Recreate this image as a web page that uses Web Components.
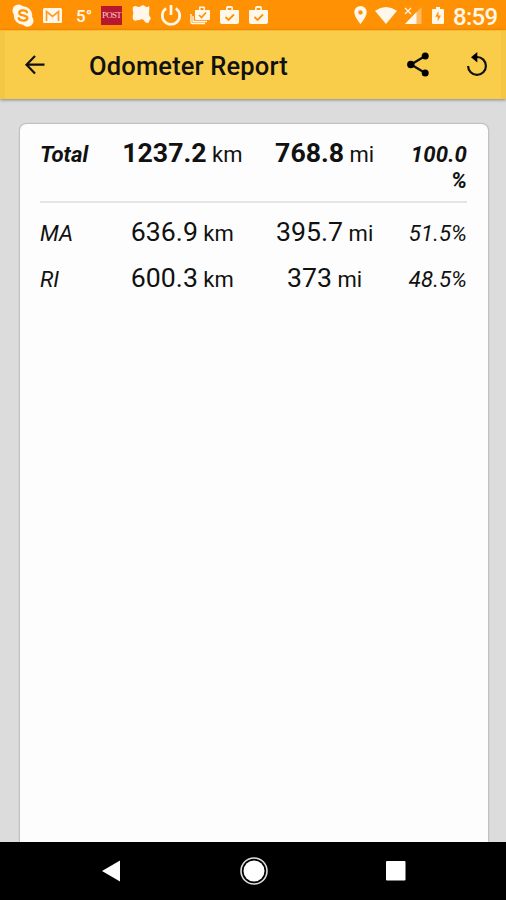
<!DOCTYPE html>
<html lang="en">
<head>
<meta charset="utf-8">
<title>Odometer Report</title>
<style>
html,body{margin:0;height:100%;overflow:hidden}
body{font-family:Roboto,"Liberation Sans",sans-serif;color:#111}
</style>
</head>
<body>
<report-app></report-app>
<script>
const define = (name, html) => {
  const t = document.createElement('template');
  t.innerHTML = html;
  customElements.define(name, class extends HTMLElement {
    constructor() {
      super();
      this.attachShadow({mode: 'open'}).append(t.content.cloneNode(true));
    }
  });
};

define('status-bar', `
<style>
:host{display:flex;height:30px;box-sizing:border-box;padding:0 9px 0 12px;background:#ff9104;color:#fff8ea;align-items:center;overflow:hidden}
svg{display:block;flex:none;overflow:visible;fill:currentColor}
.deg{font-size:17px;line-height:30px;width:16px;margin:1px 9px 0 14px;white-space:nowrap;font-weight:500}
.post{width:21px;height:19px;margin-right:10px;background:#b71830;color:#f7cfc9;font:9px/19px "Liberation Serif",serif;letter-spacing:-.8px;text-align:center;overflow:hidden}
.gap{flex:1}
.time{font-size:24px;line-height:30px;font-weight:500;margin:3px 0 0 9px;width:44px;white-space:nowrap;letter-spacing:-.7px}
</style>
<svg width="22" height="23" viewBox="0 0 22 23" style="margin-right:9px"><circle cx="11" cy="11.5" r="9.2"/><circle cx="6.5" cy="6.5" r="6"/><circle cx="15.5" cy="16.8" r="6"/><path d="M15 8.3C14 5.8 7.3 5.6 7.3 8.9c0 3.4 8 1.6 8 5.2 0 3.300-7.400 3.200-8.600.2" fill="none" stroke="#ff9104" stroke-width="2.300" stroke-linecap="round"/></svg>
<svg width="19" height="15" viewBox="0 0 19 15"><rect width="19" height="15" rx="1.5"/><path d="M3.500 13V3.500l6 5 6-5V13" fill="none" stroke="#ff9c28" stroke-width="1.700"/></svg>
<span class="deg">5°</span>
<span class="post">POST</span>
<svg width="19" height="20" viewBox="0 0 19 20" style="margin-right:9px"><path d="M1 2q2-1.500 4-.5t4-.5 4 .3 4-.3q.8 2 .2 4.500l-.2 4q.5 2 1.800 3.500-.3 2-1.500 2.500.2 2.500-2 2.500-2 0-3.300-2.500-1-1.500-3-1.200-2 1.200-4 .9-2.500 1-3.500-.2Q.2 13 .8 10.500q.8-2 .2-4-.6-2.500 0-4.500z"/></svg>
<svg width="22" height="22" viewBox="0 0 22 22" style="margin-right:8px"><path d="M6.200 4.300a8.700 8.700 0 1 0 9.600 0M11 1v10" fill="none" stroke="currentColor" stroke-width="2.700"/></svg>
<svg width="20" height="19" viewBox="0 0 20 19" style="margin-right:10px"><path d="M5 4h4V1.500q0-1 1-1h4q1 0 1 1V4h4q1 0 1 1v8q0 1-1 1H6q-1 0-1-1zM10.500 4h3V2h-3z" fill-rule="evenodd"/><path d="M1 8v8.500q0 1 1 1h13M3 10v5.500h14" fill="none" stroke="currentColor" stroke-width="1.300"/><path d="M9 9l2.500 2.500L16 6.500" fill="none" stroke="#ff9104" stroke-width="1.700"/></svg>
<svg width="19" height="19" viewBox="0 0 19 19" style="margin-right:10px"><path d="M6 4V2q0-2 2-2h3q2 0 2 2v2h5q1 0 1 1v11q0 2-2 2H2q-2 0-2-2V5q0-1 1-1zm1.700 0h3.600V2H7.700z" fill-rule="evenodd"/><path d="M5.500 11l3 3L14 8.500" fill="none" stroke="#ff9104" stroke-width="1.800"/></svg>
<svg width="19" height="19" viewBox="0 0 19 19"><path d="M6 4V2q0-2 2-2h3q2 0 2 2v2h5q1 0 1 1v11q0 2-2 2H2q-2 0-2-2V5q0-1 1-1zm1.700 0h3.600V2H7.700z" fill-rule="evenodd"/><path d="M5.500 11l3 3L14 8.500" fill="none" stroke="#ff9104" stroke-width="1.800"/></svg>
<span class="gap"></span>
<svg width="13" height="18" viewBox="0 0 13 18" style="margin-right:8px"><path fill-rule="evenodd" d="M6.500 0A6.200 6.200 0 0 0 .3 6.300C.3 11 6.500 18 6.500 18s6.200-7 6.200-11.700A6.200 6.200 0 0 0 6.500 0zm0 4.200a2.200 2.200 0 1 1 0 4.400 2.200 2.200 0 0 1 0-4.400z"/></svg>
<svg width="22" height="17" viewBox="0 0 22 17" style="margin-right:7px"><path d="M0 3.700Q11-3.700 22 3.700L11 17z"/></svg>
<svg width="18" height="17" viewBox="0 0 18 17" style="margin-right:10px"><path d="M17.500 0v17H1z" opacity=".4"/><path d="M12.500 5v12H1z"/><path d="M1 1l6 6M7 1L1 7" fill="none" stroke="currentColor" stroke-width="1.300"/></svg>
<svg width="12" height="17" viewBox="0 0 12 17"><path d="M4 0h4v2h3q1 0 1 1v13q0 1-1 1H1q-1 0-1-1V3q0-1 1-1h3z"/><path d="M6.500 4L3.300 9.800h2.400V14.500l3.200-6H6.400z" fill="#ff9104"/></svg>
<span class="time">8:59</span>
`);

define('app-bar', `
<style>
:host{display:flex;height:69px;box-sizing:border-box;align-items:center;padding:0 19px 0 25px;background:#f9cd4a;color:#111;border-top:1px solid #fcb936;box-shadow:inset 5px 0 #f5c544,inset -5px 0 #f5c544,0 1px 3px #0006;position:relative}
svg{display:block;flex:none;overflow:visible}
h1{font-size:25.500px;line-height:30px;font-weight:500;margin:2px 0 0 44px;flex:1;white-space:nowrap;letter-spacing:.17px}
</style>
<svg width="20" height="20" viewBox="0 0 20 20"><path d="M10 1L1.500 9.700l8.500 8.700M1.500 9.700H19.500" fill="none" stroke="#111" stroke-width="2.200"/></svg>
<h1><slot></slot></h1>
<svg width="22" height="25" viewBox="0 0 22 25" style="margin:-2px 38px 0 0"><path d="M18.200 4L4 12.500 18.200 21" fill="none" stroke="#111" stroke-width="2.300"/><circle cx="18.200" cy="4" r="3.500"/><circle cx="3.800" cy="12.500" r="3.700"/><circle cx="18.200" cy="21" r="3.500"/></svg>
<svg width="20" height="24" viewBox="0 0 20 24" style="margin-top:-2px"><path d="M8.500 5H10a8.900 8.900 0 1 1-8.900 8.900" fill="none" stroke="#111" stroke-width="2.200"/><path d="M10.300 0v10.500L4 5.200z"/></svg>
`);

define('report-card', `
<style>
:host{display:block;flex:1;margin:25px 18px 0 20px;padding:10px 21px 0 20px;box-sizing:border-box;background:#fdfdfd;border-radius:6px 6px 0 0;box-shadow:0 0 2px #0007}
</style><slot></slot>
`);

define('report-row', `
<style>
:host{display:grid;grid-template-columns:1fr 2fr 2fr 1fr;height:46px;padding-top:4px;box-sizing:border-box;font-size:22px;line-height:26px;align-items:baseline;align-content:start}
:host([total]){height:69px;padding-top:6px;border-bottom:2px solid #e5e5e5;margin-bottom:12px;font-weight:bold}
.v{text-align:center;white-space:nowrap}
.v span{font-size:26.700px}
.v small{font-size:22px;font-weight:400}
.p{text-align:right;justify-self:end;letter-spacing:.1px}
.n,.p{font-style:italic;min-width:0;font-size:22.200px}
</style>
<span class="n"><slot name="name"></slot></span>
<span class="v"><span><slot name="km"></slot></span> <small>km</small></span>
<span class="v"><span><slot name="mi"></slot></span> <small>mi</small></span>
<span class="p"><slot name="pct"></slot></span>
`);

define('nav-bar', `
<style>
:host{display:grid;grid-template-columns:repeat(3,142.500px);justify-content:center;justify-items:center;align-items:center;height:58px;padding-left:1px;box-sizing:border-box;background:#000}
svg{display:block}
</style>
<svg width="18" height="22" viewBox="0 0 18 22"><path d="M18 .5v21L0 11z" fill="#fff"/></svg>
<svg width="28" height="28" viewBox="0 0 28 28"><circle cx="14" cy="14" r="13" fill="none" stroke="#ddd" stroke-width="1.600"/><circle cx="14" cy="14" r="10.500" fill="#fff"/></svg>
<svg width="20" height="20" viewBox="0 0 20 20"><rect width="19.500" height="19.500" rx="1" fill="#fff"/></svg>
`);

define('report-app', `
<style>
:host{display:flex;flex-direction:column;width:506px;height:900px;background:#dcdcdc;overflow:hidden}
nav-bar{position:relative}
</style>
<status-bar></status-bar>
<app-bar>Odometer Report</app-bar>
<report-card>
<report-row total><span slot="name">Total</span><span slot="km">1237.2</span><span slot="mi">768.8</span><span slot="pct">100.0<br>%</span></report-row>
<report-row><span slot="name">MA</span><span slot="km">636.9</span><span slot="mi">395.7</span><span slot="pct">51.5%</span></report-row>
<report-row><span slot="name">RI</span><span slot="km">600.3</span><span slot="mi">373</span><span slot="pct">48.5%</span></report-row>
</report-card>
<nav-bar></nav-bar>
`);
</script>
</body>
</html>
